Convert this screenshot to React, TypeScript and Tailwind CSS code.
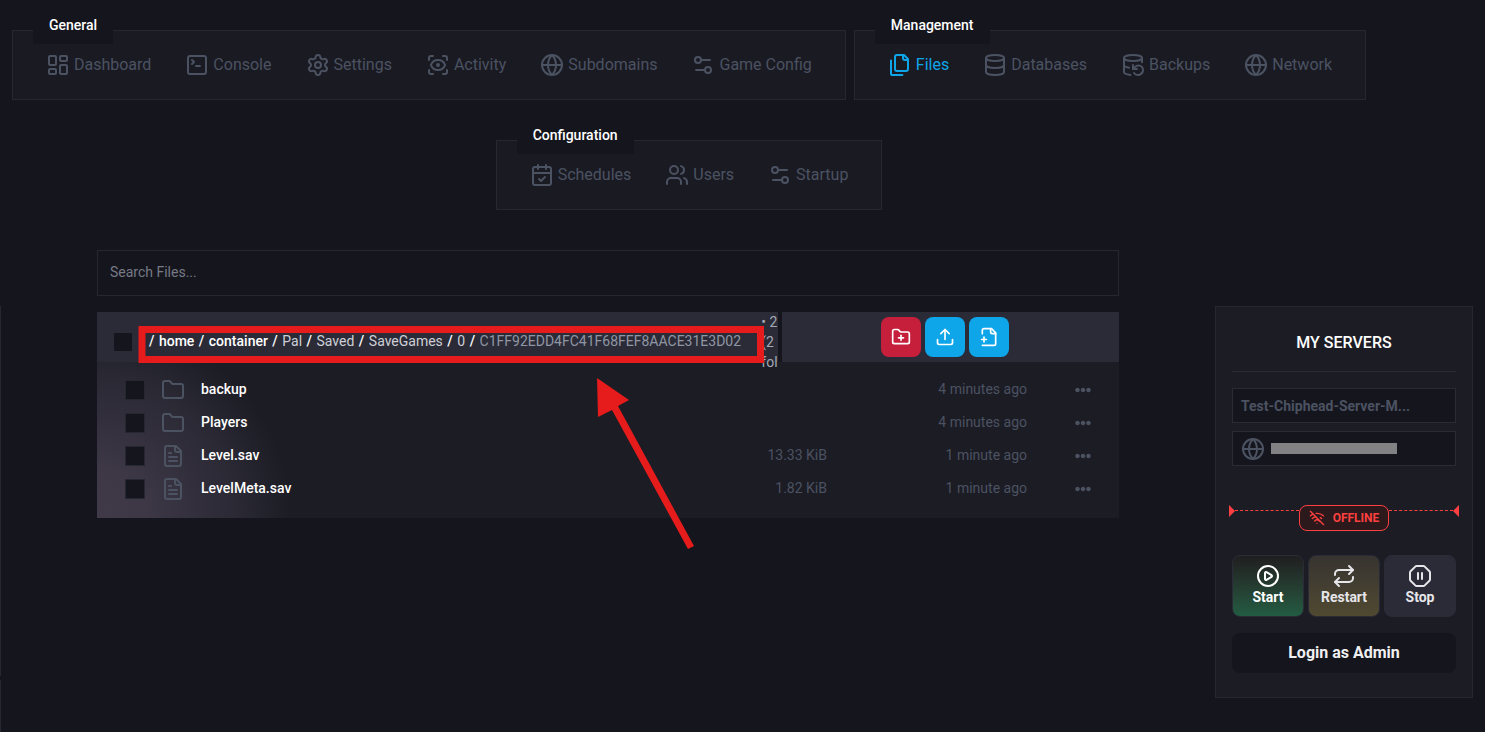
import type { ReactNode } from 'react';
import {
  CalendarCheck,
  CirclePlay,
  Database,
  DatabaseBackup,
  Folder,
  FolderPlus,
  Globe,
  LayoutDashboard,
  OctagonPause,
  Repeat,
  ScanEye,
  Settings,
  Settings2,
  SquareTerminal,
  Upload,
  Users,
  WifiOff,
} from 'lucide-react';
import { FaEllipsisH } from 'react-icons/fa';

type LineIconProps = { size: number; children: ReactNode };

function LineIcon({ size, children }: LineIconProps) {
  return (
    <svg
      width={size}
      height={size}
      viewBox="0 0 24 24"
      fill="none"
      stroke="currentColor"
      strokeWidth="2"
      strokeLinecap="round"
      strokeLinejoin="round"
      aria-hidden="true"
      className="shrink-0"
    >
      {children}
    </svg>
  );
}

function FilesIcon() {
  return (
    <LineIcon size={24}>
      <path d="M20 7h-3a2 2 0 0 1-2-2V2" />
      <path d="M9 18a2 2 0 0 1-2-2V4a2 2 0 0 1 2-2h7l4 4v10a2 2 0 0 1-2 2Z" />
      <path d="M3 7.6v12.8A1.6 1.6 0 0 0 4.6 22h9.8" />
    </LineIcon>
  );
}

function FileTextIcon() {
  return (
    <LineIcon size={24}>
      <path d="M15 2H6a2 2 0 0 0-2 2v16a2 2 0 0 0 2 2h12a2 2 0 0 0 2-2V7Z" />
      <path d="M14 2v4a2 2 0 0 0 2 2h4" />
      <path d="M10 9H8" />
      <path d="M16 13H8" />
      <path d="M16 17H8" />
    </LineIcon>
  );
}

function NewFileIcon() {
  return (
    <LineIcon size={20}>
      <path d="M4 22h14a2 2 0 0 0 2-2V7l-5-5H6a2 2 0 0 0-2 2v4" />
      <path d="M14 2v4a2 2 0 0 0 2 2h4" />
      <path d="M3 15h6" />
      <path d="M6 12v6" />
    </LineIcon>
  );
}

type NavItem = { label: string; icon: ReactNode; active?: boolean };

const general: NavItem[] = [
  { label: 'Dashboard', icon: <LayoutDashboard size={24} /> },
  { label: 'Console', icon: <SquareTerminal size={24} /> },
  { label: 'Settings', icon: <Settings size={24} /> },
  { label: 'Activity', icon: <ScanEye size={24} /> },
  { label: 'Subdomains', icon: <Globe size={24} /> },
  { label: 'Game Config', icon: <Settings2 size={24} /> },
];

const management: NavItem[] = [
  { label: 'Files', icon: <FilesIcon />, active: true },
  { label: 'Databases', icon: <Database size={24} /> },
  { label: 'Backups', icon: <DatabaseBackup size={24} /> },
  { label: 'Network', icon: <Globe size={24} /> },
];

const configuration: NavItem[] = [
  { label: 'Schedules', icon: <CalendarCheck size={24} /> },
  { label: 'Users', icon: <Users size={24} /> },
  { label: 'Startup', icon: <Settings2 size={24} /> },
];

function NavGroup({ title, items }: { title: string; items: NavItem[] }) {
  return (
    <section className="relative flex h-[70px] items-center border border-[#272732] bg-[#1a1a23] px-4">
      <h2 className="absolute -top-6 left-5 bg-[#15151d] px-4 py-2 text-sm leading-[21px] font-medium text-white">
        {title}
      </h2>
      {items.map((item) => (
        <a
          key={item.label}
          href="#"
          className={
            item.active
              ? 'flex items-center gap-1 px-[17px] text-[#0ea5e9]'
              : 'flex items-center gap-1 px-[17px] text-[#4b5261]'
          }
        >
          {item.icon}
          <span>{item.label}</span>
        </a>
      ))}
    </section>
  );
}

const files = [
  { name: 'backup', folder: true, size: '', modified: '4 minutes ago' },
  { name: 'Players', folder: true, size: '', modified: '4 minutes ago' },
  { name: 'Level.sav', folder: false, size: '13.33 KiB', modified: '1 minute ago' },
  { name: 'LevelMeta.sav', folder: false, size: '1.82 KiB', modified: '1 minute ago' },
];

const crumbs = [
  { label: 'home', tone: 'px-px text-white' },
  { label: 'container', tone: 'px-px text-white' },
  { label: 'Pal', tone: 'px-px font-normal text-[#cdd0d6]' },
  { label: 'Saved', tone: 'px-px font-normal text-[#cdd0d6]' },
  { label: 'SaveGames', tone: 'px-px font-normal text-[#cdd0d6]' },
  { label: '0', tone: 'px-px font-normal text-[#cdd0d6]' },
];

function FileManager() {
  return (
    <div className="relative mt-4">
      <div className="flex h-[50px] gap-1">
        <div className="flex w-2/3 items-start bg-[#2b2a37] pl-[17px]">
          <input
            type="checkbox"
            aria-label="Select all files"
            className="mt-[21px] size-[18px] shrink-0 appearance-none bg-[#15151d]"
          />
          <nav aria-label="Path" className="mt-[19px] ml-[17px] flex-1 text-sm leading-5 font-medium whitespace-nowrap text-white">
            {crumbs.map((crumb) => (
              <span key={crumb.label}>
                /{' '}
                <a href="#" className={crumb.tone}>
                  {crumb.label}
                </a>{' '}
              </span>
            ))}
            / <span className="px-px font-normal text-[#8f96a3]">C1FF92EDD4FC41F68FEF8AACE31E3D02</span>
          </nav>
          <p className="w-[17px] shrink-0 overflow-x-clip text-sm leading-5 whitespace-pre text-[#a3a9b5]">
            {'• 2\n(2\nfol'}
          </p>
        </div>
        <div className="flex flex-1 items-center justify-center gap-1 bg-[#2b2a37] pr-3 text-white">
          <button type="button" aria-label="New folder" className="flex size-10 items-center justify-center rounded-lg bg-[#c51f3c]">
            <FolderPlus size={20} />
          </button>
          <button type="button" aria-label="Upload" className="flex size-10 items-center justify-center rounded-lg bg-[#0ea5e9]">
            <Upload size={20} />
          </button>
          <button type="button" aria-label="New file" className="flex size-10 items-center justify-center rounded-lg bg-[#0ea5e9]">
            <NewFileIcon />
          </button>
        </div>
      </div>

      <div className="bg-[#1c1c25] bg-[radial-gradient(circle_at_0%_100%,#403a48_0px,#3d3746_50px,#2a2934_140px,#1c1c25_195px)] pt-[11px] pb-[13px]">
        <table className="w-full text-sm text-[#4b5261]">
          <tbody>
            {files.map((file) => (
              <tr key={file.name} className="h-[33px]">
                <td className="w-16 pl-7">
                  <input
                    type="checkbox"
                    aria-label={`Select ${file.name}`}
                    className="block size-5 appearance-none border border-[#272732] bg-[#15151d]"
                  />
                </td>
                <td className="w-10">{file.folder ? <Folder size={24} /> : <FileTextIcon />}</td>
                <td className="pb-0.5 font-medium text-white">
                  <a href="#">{file.name}</a>
                </td>
                <td className="pb-0.5 text-right">{file.size}</td>
                <td className="w-[200px] pb-0.5 text-right">{file.modified}</td>
                <td className="w-[92px] pl-12">
                  <button type="button" aria-label={`Actions for ${file.name}`} className="block">
                    <FaEllipsisH size={16} />
                  </button>
                </td>
              </tr>
            ))}
          </tbody>
        </table>
      </div>

      <svg
        width="640"
        height="240"
        viewBox="0 0 640 240"
        aria-hidden="true"
        className="pointer-events-none absolute top-3 left-10"
      >
        <rect x="5" y="5.5" width="618.5" height="30" fill="none" stroke="#e61b1b" strokeWidth="7" />
        <path d="M460 54L492 76L481 82L557 222L551 225L475 86L461 93Z" fill="#e61b1b" />
      </svg>
    </div>
  );
}

function ServerPanel() {
  return (
    <aside className="mt-14 flex h-fit w-[258px] shrink-0 flex-col border border-[#272732] bg-[#1c1c25] px-4 pb-6">
      <h2 className="border-b border-[#2b2b36] pt-6 pb-4 text-center leading-6 font-medium text-white">
        MY SERVERS
      </h2>
      <div className="mt-4 flex h-[35px] items-center border border-[#2b2b36] bg-[#15151d] px-2 text-sm font-bold text-[#4b5261]">
        Test-Chiphead-Server-M...
      </div>
      <div className="mt-2 flex h-[35px] items-center gap-[6px] border border-[#2b2b36] bg-[#15151d] px-2 text-[#4b5261]">
        <Globe size={24} />
        <span className="h-[11px] w-[126px] bg-[#828284]" />
      </div>

      <div className="-mx-[3px] mt-[39px] flex items-start text-[#ff4040]">
        <svg width="6" height="12" viewBox="0 0 6 12" aria-hidden="true">
          <path d="M0 0L6 6L0 12Z" fill="currentColor" />
        </svg>
        <span className="mt-[5px] flex-1 border-t border-dashed border-current" />
        <span className="flex h-[26px] w-[90px] items-center justify-center gap-2 rounded-lg border border-current bg-[#2b191b] text-xs font-bold">
          <WifiOff size={16} />
          OFFLINE
        </span>
        <span className="mt-[5px] flex-1 border-t border-dashed border-current" />
        <svg width="6" height="12" viewBox="0 0 6 12" aria-hidden="true">
          <path d="M6 0L0 6L6 12Z" fill="currentColor" />
        </svg>
      </div>

      <div className="mt-6 grid grid-cols-3 gap-1 text-sm font-bold text-white">
        <button type="button" className="flex h-[62px] flex-col items-center rounded-lg border border-[#2b2a37] bg-linear-to-b from-[#1f1e20] to-[#225c42] pt-2">
          <CirclePlay size={24} />
          <span className="leading-[18px]">Start</span>
        </button>
        <button type="button" className="flex h-[62px] flex-col items-center rounded-lg border border-[#2b2a37] bg-linear-to-b from-[#373430] to-[#504931] pt-2 text-[#e6e6ea]">
          <Repeat size={24} />
          <span className="leading-[18px]">Restart</span>
        </button>
        <button type="button" className="flex h-[62px] flex-col items-center rounded-lg border border-[#2b2a37] bg-[#2b2a37] pt-2 text-[#e6e6ea]">
          <OctagonPause size={24} />
          <span className="leading-[18px]">Stop</span>
        </button>
      </div>
      <button type="button" className="mt-4 h-10 rounded-lg bg-[#15151d] font-bold text-[#f0f0f2]">
        Login as Admin
      </button>
    </aside>
  );
}

export default function App() {
  return (
    <div className="flex min-h-screen flex-col bg-[#15151d] font-['Roboto',sans-serif] text-base">
      <header className="flex flex-wrap justify-center gap-x-2 gap-y-10 pt-[30px] pr-[107px]">
        <NavGroup title="General" items={general} />
        <NavGroup title="Management" items={management} />
        <NavGroup title="Configuration" items={configuration} />
      </header>

      <div className="mt-10 flex flex-1 pr-3">
        <div className="mt-14 flex w-px flex-col gap-1" aria-hidden="true">
          <div className="h-[370px] bg-[#272732]" />
          <div className="flex-1 bg-[#272732]" />
        </div>
        <main className="mx-24 min-w-0 flex-1">
          <input
            type="search"
            aria-label="Search files"
            placeholder="Search Files..."
            className="block h-[46px] w-full border border-[#272732] bg-transparent px-3 pb-0.5 text-sm text-white placeholder:text-[#757a85]"
          />
          <FileManager />
        </main>
        <ServerPanel />
      </div>
    </div>
  );
}
